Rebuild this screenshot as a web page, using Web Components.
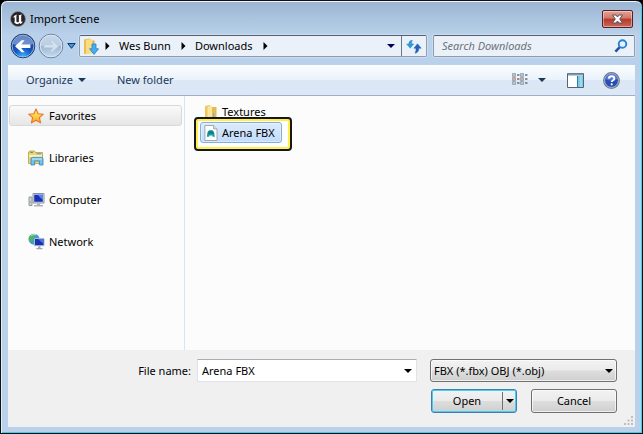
<!DOCTYPE html>
<html lang="en">
<head>
<meta charset="utf-8">
<title>Import Scene</title>
<style>
  html, body { margin: 0; height: 100%; background: #000; }
  body { font: 11px/16px "Noto Sans", "Open Sans", sans-serif; color: #000; }
</style>
</head>
<body>
<import-dialog></import-dialog>
<script>
const RESET = `
  *, *::before, *::after { box-sizing: border-box; }
  button, input, select { font: inherit; color: inherit; margin: 0; padding: 0; border: 0; background: none; border-radius: 0; outline: 0; }
  svg { display: block; flex: none; }
`;
function define(name, css, html) {
  customElements.define(name, class extends HTMLElement {
    constructor() {
      super();
      this.attachShadow({ mode: 'open' }).innerHTML = `<style>${RESET}${css}</style>${html}`;
    }
  });
}

const ICONS = {
  unreal: [16, 16, `<circle cx="8" cy="8" r="7.5" fill="#2b2425" stroke="#8e9199" stroke-width=".7"/>
    <path d="M3 6.6Q4.2 4.3 7.2 3.6Q6.4 4.3 6.4 5.2V10.6Q7.4 12 8.9 10.7V5.4Q8.9 4.6 8.3 4.4Q10.2 4.3 12 3.2Q11.2 4.2 11.2 5.4V10.5Q12 11.2 13 10.2Q12.2 12.2 10.4 13L9.4 12L7.9 13.2Q5.6 13 4.1 11.2Q4.8 11 4.7 10V6.7Q4.6 5.7 3 6.6Z" fill="#fff"/>`],
  close: [29, 16, `<path d="M9.5 4H13L14.5 6L16 4H19.5L16.7 8L19.5 12H16L14.5 10L13 12H9.5L12.3 8Z" fill="#fff" stroke="#54565f" stroke-width="1"/>`],
  back: [26, 26, `<defs><radialGradient id="b" cx=".5" cy=".95" r=".9"><stop offset="0" stop-color="#35b9ff"/><stop offset=".4" stop-color="#1558c4"/><stop offset="1" stop-color="#173a8b"/></radialGradient></defs>
    <circle cx="13" cy="13" r="11.8" fill="url(#b)" stroke="#21365f"/><circle cx="13" cy="13" r="10.9" fill="none" stroke="#9cbde8" stroke-width=".9"/>
    <path d="M2.8 11A10.3 10.3 0 0 1 23.2 11Q18 13 13 12.5Q8 13 2.8 11Z" fill="#bdd3f5" opacity=".5"/>
    <path d="M5 13.2L11.6 7.2H14.6L11.2 11.4H20.4V15H11.2L14.6 19.2H11.6Z" fill="#fff"/>`],
  forward: [26, 26, `<defs><linearGradient id="f" x2="0" y2="1"><stop offset="0" stop-color="#c8d8ea"/><stop offset=".48" stop-color="#b9cde2"/><stop offset=".52" stop-color="#9db8d4"/><stop offset="1" stop-color="#c9dcf0"/></linearGradient></defs>
    <circle cx="13" cy="13" r="11.8" fill="url(#f)" stroke="#67809d"/><circle cx="13" cy="13" r="10.8" fill="none" stroke="#d9e6f3"/>
    <path d="M20.6 13.2L14.4 7.6H11.8L14.8 11.6H6V14.8H14.8L11.8 18.8H14.4Z" fill="#d3e1f0" stroke="#b3c7dc" stroke-width=".6"/>`],
  history: [9, 6, `<path d="M.8 .5H8.2L4.5 5.3Z" fill="#3f9bd8" stroke="#12306a"/>`],
  folderdown: [16, 17, `<path d="M1 1.5L7 .5V15L1 16Z" fill="#e9bf4b"/><path d="M3 2L9.5 1V15.2L3 16.4Z" fill="#f9dd86"/><path d="M9.5 2.5H11.5V14.5L9.5 15.2Z" fill="#dca93a"/>
    <path d="M9 6H13V10.8H15.6L11 16.4L6.6 10.8H9Z" fill="#45aef0" stroke="#2480c4" stroke-width=".8"/>`],
  right: [5, 8, `<path d="M.5 0L4.5 4L.5 8Z" fill="#000"/>`],
  down: [8, 4, `<path d="M0 0H8L4 4Z" fill="currentColor"/>`],
  refresh: [16, 15, `<path d="M6.4 .8Q2.6 1 2.8 4.6H.6L4.2 8.8L7.8 4.6H5.8Q5.2 2.4 6.4 .8Z" transform="translate(0 .4)" fill="#2f9ad8" stroke="#2f8fd0" stroke-width=".5"/><path d="M9 14.2Q13 13.4 12.8 9.2H15.2L11.5 4.8L7.9 9.2H10Q10.3 12 9 14.2Z" fill="#2463b8" stroke="#2463b8" stroke-width=".5"/>`],
  search: [14, 14, `<path d="M1.4 12.6L6 7.8" stroke="#2256a2" stroke-width="2.6"/><circle cx="8.5" cy="5" r="3.8" fill="#e2f2fd" stroke="#2b80d0" stroke-width="1.9"/>`],
  views: [16, 14, [1, 5, 9].map(y => [0, 8].map(x => `<path d="M${x + .5} ${y - .5}h3v3h-3z" fill="#fafafa" stroke="#8b95a4" stroke-width=".8"/><path d="M${x + 5} ${y + 1}h2.5" stroke="#42516a" stroke-width="1.2"/><path d="M${x + 1.3} ${y + .3}h1.4v1.4h-1.4z" fill="${y == 5 ? '#e05130' : '#69a875'}"/>`).join('')).join('')],
  pane: [17, 15, `<path d="M.5 .5H16.5V14.5H.5Z" fill="#fff" stroke="#50657d"/><path d="M1 1.5H16" stroke="#8297ad" stroke-width="2"/><path d="M10.5 3H16V14H10.5Z" fill="#7ccbe5"/><path d="M10.5 3V14" stroke="#387c9a"/><path d="M14 3V14" stroke="#b8eaf4"/>`],
  help: [17, 17, `<circle cx="8.5" cy="8.5" r="7.8" fill="#244db7" stroke="#747b86" stroke-width="1.2"/><circle cx="8.5" cy="8.5" r="6.9" fill="none" stroke="#cbd2e1" stroke-width=".8"/><path d="M2.6 7A6 6 0 0 1 14.4 7Q8.5 10 2.6 7Z" fill="#7898df" opacity=".6"/><path d="M5.8 6.6Q6 4.2 8.6 4.2Q11.3 4.2 11.3 6.4Q11.3 7.7 9.8 8.5Q8.7 9.1 8.7 10.1" fill="none" stroke="#fff" stroke-width="1.9"/><circle cx="8.7" cy="12.3" r="1.1" fill="#fff"/>`],
  star: [16, 16, `<defs><linearGradient id="s" x2="0" y2="1"><stop offset="0" stop-color="#ffe680"/><stop offset=".45" stop-color="#ffd74b"/><stop offset="1" stop-color="#ff9d1f"/></linearGradient></defs><path d="M8 .9L10.1 5.7L15.3 6.2L11.4 9.7L12.6 14.9L8 12.2L3.4 14.9L4.6 9.7L.7 6.2L5.9 5.7Z" fill="url(#s)" stroke="#e1762c" stroke-width="1.1" stroke-linejoin="round"/>`],
  libraries: [16, 16, `<path d="M.5 13.5V2L2 1H6.5L7.5 2.5H14.5V13.5Z" fill="#ecd37a" stroke="#b99a45" stroke-width=".8"/><path d="M1.2 5H14V7H1.2Z" fill="#fbf0b5"/><path d="M2.2 2.4H5" stroke="#4b9b56"/><path d="M8.5 3.8H13" stroke="#4d9ed4"/>
    <path d="M3 15V9Q3 7.4 4.6 7.4H13.4Q15 7.4 15 9V15H11.4V11H6.6V15Z" fill="#6fc3ec" stroke="#3284b8" stroke-width=".8"/><path d="M4 9H14" stroke="#c9edfb"/>`],
  computer: [17, 16, `<path d="M1 5H4V13.5H1Z" fill="#cfd3d6" stroke="#83898e" stroke-width=".8"/><path d="M1.8 10H2.8" stroke="#4ca64a"/><path d="M5 1.5H16V11H5Z" fill="#dfe3e8" stroke="#8b929b"/><path d="M6.2 2.7H14.8V9.8H6.2Z" fill="#1731b8"/><path d="M9.5 2.7H14.8V8Z" fill="#5d86ea"/><path d="M9 11.4H12V13H15V14.4H6V13H9Z" fill="#aeb4bb"/>`],
  network: [17, 17, `<circle cx="6" cy="6.2" r="5.5" fill="#3e9ad8"/><path d="M1 4.5Q3 .9 7 1.1L7.8 3L5 4.4L5.4 7.2L3 8.6L1.2 8Q.6 6 1 4.5ZM4 10L6.5 9V11.6Z" fill="#52b557"/><path d="M3 2.8Q5 .9 8 1.8" stroke="#b8ecc2" fill="none"/><path d="M6.5 5.5H16V12.7H6.5Z" fill="#1830b4" stroke="#b0bac8"/><path d="M10 6H15.5V11Z" fill="#4776e0"/><path d="M10.2 13.2H12.4V15H14.4V16.2H8.4V15H10.2Z" fill="#9da5af"/>`],
  folder: [14, 16, `<path d="M1 2L6 1V14L1 15Z" fill="#edc75f"/><path d="M3.5 2.8L8 1.5V14.4L3.5 15.6Z" fill="#fbe69b"/><path d="M8 3H12.5V13.6L8 14.4Z" fill="#e6bc52"/><path d="M9 9.5H10.2V13H9Z" fill="#6eb0df"/>`],
  file: [14, 16, `<path d="M.9 .5H9.6L13 3.9V15.5H.9Z" fill="#fdfdfd" stroke="#9aa0a8" stroke-width=".9"/><path d="M9.6 .5V3.9H13" fill="#e3e6e9" stroke="#9aa0a8" stroke-width=".9"/><path d="M2.8 11.8L3.4 7.4L5 5.5H8.6L10.2 7.4L10.8 11.8H8.7L8.2 10.4H5.6L5 11.8Z" fill="#16a3a4"/><path d="M4 7L5.2 5.6H8.4L9.6 7V9H4Z" fill="#0d8589"/>`],
  grip: [9, 9, `<path d="M7 0h2v2h-2zM7 3.5h2v2h-2zM7 7h2v2h-2zM3.5 3.5h2v2h-2zM3.5 7h2v2h-2zM0 7h2v2h-2z" fill="#bcbfc4"/>`]
};
customElements.define('ui-icon', class extends HTMLElement {
  constructor() { super(); this.attachShadow({ mode: 'open' }); }
  connectedCallback() {
    const [w, h, art] = ICONS[this.getAttribute('name')];
    this.shadowRoot.innerHTML = `<style>:host{display:block;flex:none;pointer-events:none}svg{display:block}</style>
      <svg width="${w}" height="${h}" viewBox="0 0 ${w} ${h}" aria-hidden="true">${art}</svg>`;
  }
});

define('title-bar', `
  :host { display: flex; align-items: center; justify-content: space-between; height: 33px; padding: 0 2px; }
  .name { display: flex; align-items: center; gap: 4px; }
  button { height: 18px; border: 1px solid #552126; border-radius: 2px; background: linear-gradient(#e6a397, #d27668 45%, #b6382a 50%, #c9685a); box-shadow: inset 0 0 0 1px #ffffff66; display: grid; place-items: center; overflow: hidden; }
`, `<span class="name"><ui-icon name="unreal"></ui-icon><slot></slot></span>
    <button aria-label="Close"><ui-icon name="close"></ui-icon></button>`);

define('crumb-item', `
  :host { display: flex; align-items: center; }
  ui-icon { margin: 0 9px 0 10px; }
`, `<button><slot></slot></button><ui-icon name="right"></ui-icon>`);

define('nav-bar', `
  :host { display: flex; align-items: center; height: 22px; margin-bottom: 8px; gap: 6px; }
  .arrows { display: flex; align-items: center; gap: 2px; padding: 0 0 0 2px; flex: none; }
  .arrows button { display: block; border-radius: 13px; }
  .arrows .hist { margin: 0 -4px 0 0; padding: 0 1px; }
  .field { display: flex; align-items: center; height: 22px; border: 1px solid #8d9caf; border-top-color: #565f70; border-radius: 2px; background: #eaf1f9; box-shadow: 0 0 0 1px #ffffff44; }
  .address { flex: 1; min-width: 0; padding-left: 3px; }
  .root { display: flex; align-items: center; gap: 6px; margin-right: 9px; }
  .space { flex: 1; }
  .drop { width: 20px; height: 20px; display: grid; place-items: center; color: #00005a; }
  .reload { width: 25px; height: 20px; display: grid; place-items: center; border-left: 1px solid #6c788a; }
  .search { flex: 0 1 202px; min-width: 0; padding: 0 6px 0 8px; }
  input { flex: 1; min-width: 0; font-style: italic; }
  input::placeholder { color: #6e7277; opacity: 1; }
`, `<div class="arrows">
      <button aria-label="Back"><ui-icon name="back"></ui-icon></button>
      <button aria-label="Forward"><ui-icon name="forward"></ui-icon></button>
      <button class="hist" aria-label="Recent locations"><ui-icon name="history"></ui-icon></button>
    </div>
    <div class="field address">
      <button class="root" aria-label="Root"><ui-icon name="folderdown"></ui-icon><ui-icon name="right"></ui-icon></button>
      <crumb-item>Wes Bunn</crumb-item><crumb-item>Downloads</crumb-item>
      <span class="space"></span>
      <button class="drop" aria-label="Previous locations"><ui-icon name="down"></ui-icon></button>
      <button class="reload" aria-label="Refresh"><ui-icon name="refresh"></ui-icon></button>
    </div>
    <div class="field search"><input type="search" aria-label="Search Downloads" placeholder="Search Downloads"><ui-icon name="search"></ui-icon></div>`);

define('tool-bar', `
  :host { display: flex; align-items: center; height: 31px; padding: 0 15px 0 18px; color: #1e395b; background: linear-gradient(#fafdff, #eaf3fb 48%, #dce7f5 52%, #dde8f6); border-bottom: 1px solid #a0afc8; }
  button { display: flex; align-items: center; }
  .org { gap: 5px; margin-right: 31px; }
  .space { flex: 1; }
  .view { gap: 10px; margin-right: 21px; }
  .pane { margin-right: 19px; }
`, `<button class="org">Organize <ui-icon name="down"></ui-icon></button>
    <button>New folder</button><span class="space"></span>
    <button class="view" aria-label="Change your view"><ui-icon name="views"></ui-icon><ui-icon name="down"></ui-icon></button>
    <button class="pane" aria-label="Show the preview pane"><ui-icon name="pane"></ui-icon></button>
    <button aria-label="Help"><ui-icon name="help"></ui-icon></button>`);

define('place-item', `
  :host { display: block; }
  button { display: flex; align-items: center; width: 100%; height: 21px; padding: 0 0 0 18px; border: 1px solid transparent; border-radius: 3px; }
  .ic { width: 21px; }
  :host([current]) button { border-color: #d9d9d9; background: linear-gradient(#fafafa, #e6e6e6); }
`, `<button><span class="ic"><slot name="icon"></slot></span><slot></slot></button>`);

define('places-pane', `
  :host { display: flex; flex-direction: column; gap: 21px; flex: none; width: 177px; padding: 9px 2px 0 1px; border-right: 1px solid #d6e5f5; }
`, `<slot></slot>`);

define('file-row', `
  :host { display: block; position: relative; }
  button { display: flex; align-items: center; gap: 4px; height: 21px; padding: 0 6px 0 3px; border: 1px solid transparent; border-radius: 3px; }
  :host([selected]) button { position: relative; border-color: #84acdd; background: linear-gradient(#dcebfc, #c1dbfc); box-shadow: inset 0 0 0 1px #ffffff66; }
  :host([selected])::before { content: ""; position: absolute; inset: -5px -10px -8px -6px; border: 2px solid #161616; border-radius: 4px; background: #fff; box-shadow: inset 0 0 0 2px #fff04a; }
`, `<button><slot name="icon"></slot><slot></slot></button>`);

define('file-list', `
  :host { display: flex; flex-direction: column; align-items: flex-start; flex: 1; min-width: 0; padding: 5px 15px; }
`, `<slot></slot>`);

define('dialog-footer', `
  :host { display: grid; grid-template-columns: 1fr 187px; column-gap: 13px; row-gap: 7px; padding: 9px 18px 14px 16px; background: #f0f0f0; position: relative; }
  .name { display: grid; grid-template-columns: 167px 1fr; column-gap: 6px; align-items: center; }
  label { text-align: right; white-space: nowrap; }
  .combo { display: flex; height: 23px; background: #fff; border: 1px solid #e2e3ea; border-top-color: #abadb3; border-radius: 1px; }
  .combo input { flex: 1; min-width: 0; padding: 0 0 0 4px; }
  .combo button { width: 16px; display: grid; place-items: center; }
  .type { position: relative; display: flex; }
  .type ui-icon { position: absolute; right: 4px; top: 10px; }
  select { appearance: none; width: 100%; height: 23px; padding: 0 16px 0 3px; }
  select, .btn { border: 1px solid #707070; border-radius: 3px; background: linear-gradient(#f2f2f2, #ebebeb 48%, #dddddd 52%, #cfcfcf); box-shadow: inset 0 0 0 1px #ffffffaa; }
  .actions { grid-column: 2; display: grid; grid-template-columns: 1fr 1fr; gap: 14px; padding-left: 1px; }
  .btn { height: 24px; }
  .split { display: flex; border-color: #3c7fb1; box-shadow: inset 0 0 0 1px #48cdf2; }
  .split .main { flex: 1; }
  .split .more { width: 14px; margin: 2px 0; display: grid; place-items: center; border-left: 1px solid #707070; }
  .grip { position: absolute; right: 2px; bottom: 2px; }
`, `<div class="name"><label for="fn">File name:</label>
      <div class="combo"><input id="fn" type="text" value="Arena FBX"><button aria-label="Show file names"><ui-icon name="down"></ui-icon></button></div></div>
    <div class="type"><select aria-label="File type"><option>FBX (*.fbx) OBJ (*.obj)</option></select><ui-icon name="down"></ui-icon></div>
    <div class="actions">
      <div class="btn split"><button class="main">Open</button><button class="more" aria-label="Open options"><ui-icon name="down"></ui-icon></button></div>
      <button class="btn">Cancel</button>
    </div>
    <ui-icon class="grip" name="grip"></ui-icon>`);

define('import-dialog', `
  :host { display: flex; flex-direction: column; min-height: 100vh; box-sizing: border-box; padding: 1px 7px 6px; border: 1px solid #111; border-radius: 7px 7px 0 0;
    background: linear-gradient(#9bb5d2, #b9d1ea 34px, #b9d1ea); box-shadow: inset 0 1px #eef5fb, inset 1px 0 #e2eefa, inset -1px 0 #35d0ea, inset 0 -1px #35d0ea; }
  .body { flex: 1; display: flex; background: #fcfcfc; }
`, `<title-bar>Import Scene</title-bar>
    <nav-bar></nav-bar>
    <tool-bar></tool-bar>
    <div class="body">
      <places-pane>
        <place-item current><ui-icon slot="icon" name="star"></ui-icon>Favorites</place-item>
        <place-item><ui-icon slot="icon" name="libraries"></ui-icon>Libraries</place-item>
        <place-item><ui-icon slot="icon" name="computer"></ui-icon>Computer</place-item>
        <place-item><ui-icon slot="icon" name="network"></ui-icon>Network</place-item>
      </places-pane>
      <file-list>
        <file-row><ui-icon slot="icon" name="folder"></ui-icon>Textures</file-row>
        <file-row selected><ui-icon slot="icon" name="file"></ui-icon>Arena FBX</file-row>
      </file-list>
    </div>
    <dialog-footer></dialog-footer>`);
</script>
</body>
</html>
